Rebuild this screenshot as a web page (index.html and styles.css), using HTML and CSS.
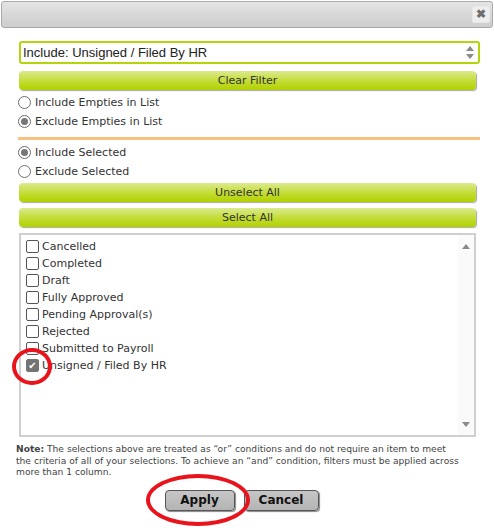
FILE: index.html
```html
<!doctype html>
<html lang="en">
 <head>
  <meta charset="UTF-8">
  <title>Column Filter</title>
  <meta name="viewport" content="width=device-width, initial-scale=1.0">
  <link rel="stylesheet" href="styles.css">
 </head>
 <body>
  <div class="dialog">
   <div class="titlebar">
    <button class="close-btn" title="Close">&#10006;</button>
   </div>
   <div class="content">
    <div class="select-box">
     <span>Include: Unsigned / Filed By HR</span>
     <span class="spinner"><i class="up"></i><i class="down"></i></span>
    </div>
    <button class="green-btn first">Clear Filter</button>

    <div class="radio-group">
     <label class="radio"><span class="dot"></span>Include Empties in List</label>
     <label class="radio"><span class="dot checked"></span>Exclude Empties in List</label>
    </div>

    <div class="divider"></div>

    <div class="radio-group">
     <label class="radio"><span class="dot checked"></span>Include Selected</label>
     <label class="radio"><span class="dot"></span>Exclude Selected</label>
    </div>

    <button class="green-btn tight">Unselect All</button>
    <button class="green-btn">Select All</button>

    <div class="list">
     <ul class="items">
      <li><span class="box"></span>Cancelled</li>
      <li><span class="box"></span>Completed</li>
      <li><span class="box"></span>Draft</li>
      <li><span class="box"></span>Fully Approved</li>
      <li><span class="box"></span>Pending Approval(s)</li>
      <li><span class="box"></span>Rejected</li>
      <li><span class="box"></span>Submitted to Payroll</li>
      <li><span class="box checked">&#10004;</span>Unsigned / Filed By HR</li>
     </ul>
     <div class="scrollbar"><i class="up"></i><i class="down"></i></div>
    </div>

    <p class="note"><b>Note:</b> The selections above are treated as “or” conditions and do not require an item to meet the criteria of all of your selections. To achieve an “and” condition, filters must be applied across more than 1 column.</p>

    <div class="actions">
     <button class="gray-btn apply">Apply</button>
     <button class="gray-btn cancel">Cancel</button>
    </div>
   </div>

   <!-- annotation marks drawn on top of the screenshot -->
   <div class="mark mark-check"></div>
   <div class="mark mark-apply"></div>
  </div>
 </body>
</html>
```

FILE: styles.css
```css
body {
  margin: 0;
  font-family: 'DejaVu Sans', Verdana, sans-serif;
  font-size: 11px;
  color: #333;
  background: #fff;
}

.dialog {
  position: relative;
  width: 494px;
  height: 530px;
  overflow: hidden;
}

.titlebar {
  margin: 1px 1px 0 1px;
  height: 25px;
  border: 1px solid #a9a9a9;
  border-radius: 3px;
  background: linear-gradient(#e4e4e4, #cdcdcd);
  display: flex;
  justify-content: flex-end;
  align-items: center;
  padding-right: 2px;
}

.close-btn {
  width: 18px;
  height: 17px;
  padding: 0;
  border: 1px solid #e6e6e6;
  border-radius: 2px;
  background: #eeeeee;
  color: #6e6e6e;
  font-size: 12px;
  font-weight: bold;
  line-height: 15px;
  cursor: pointer;
}

.content {
  padding: 13px 16px 0 19px;
}

.select-box {
  width: 455px;
  height: 19px;
  border: 2px solid #b6d30b;
  border-radius: 3px;
  display: flex;
  justify-content: space-between;
  align-items: center;
  padding-left: 2px;
  font-family: 'Liberation Sans', Arial, sans-serif;
  font-size: 13px;
  color: #222;
}

.spinner {
  display: flex;
  flex-direction: column;
  gap: 3px;
  margin-right: 4px;
}

.spinner i, .scrollbar i {
  display: block;
  width: 0;
  height: 0;
  border-left: 4px solid transparent;
  border-right: 4px solid transparent;
}

.spinner i.up, .scrollbar i.up {
  border-bottom: 5px solid #8a8a8a;
}

.spinner i.down, .scrollbar i.down {
  border-top: 5px solid #8a8a8a;
}

.green-btn {
  display: block;
  width: 457px;
  height: 19px;
  margin-top: 6px;
  padding: 0;
  border: none;
  border-radius: 4px;
  background: linear-gradient(#dcea90, #c2dc33 55%, #b3d000);
  box-shadow: 1px 1px 1px #a9a9a9;
  font-family: 'DejaVu Sans', Verdana, sans-serif;
  font-size: 11px;
  color: #333;
  cursor: pointer;
}

.green-btn.first {
  margin-top: 7px;
}

.green-btn.tight {
  margin-top: 2px;
}

.radio-group {
  margin: 3px 0 0 -1px;
}

.radio {
  display: flex;
  align-items: center;
  height: 19px;
}

.dot {
  width: 11px;
  height: 11px;
  border: 1px solid #707070;
  border-radius: 50%;
  margin-right: 4px;
  background: #fff;
  position: relative;
}

.dot.checked {
  border-color: #6a6a6a;
}

.dot.checked::after {
  content: "";
  position: absolute;
  left: 2px;
  top: 2px;
  width: 7px;
  height: 7px;
  border-radius: 50%;
  background: #777;
}

.divider {
  width: 462px;
  height: 3px;
  margin: 6px 0 2px -1px;
  background: #f9c17f;
}

.list {
  display: flex;
  width: 453px;
  height: 200px;
  margin-top: 6px;
  border: 2px solid #cfcfcf;
}

.items {
  flex: 1;
  list-style: none;
  margin: 0;
  padding: 3px 0 0 5px;
}

.items li {
  display: flex;
  align-items: center;
  height: 17px;
}

.box {
  width: 11px;
  height: 11px;
  border: 1px solid #555;
  border-radius: 2px;
  margin-right: 3px;
  background: #fff;
  font-size: 10px;
  line-height: 11px;
  text-align: center;
}

.box.checked {
  background: #747474;
  border-color: #747474;
  color: #fff;
}

.scrollbar {
  width: 16px;
  background: #fafafa;
  display: flex;
  flex-direction: column;
  justify-content: space-between;
  align-items: center;
  padding: 9px 0 8px;
}

.note {
  margin: 7px 0 0 -3px;
  font-size: 9.15px;
  line-height: 11.5px;
  color: #444;
  width: 447px;
}

.actions {
  display: flex;
  justify-content: center;
  gap: 9px;
  margin-top: 11px;
  padding-right: 14px;
}

.gray-btn {
  height: 21px;
  padding: 0;
  border: 1px solid #555;
  border-radius: 4px;
  background: linear-gradient(#c6c6c6, #b4b4b4);
  box-shadow: 1px 1px 1px #888;
  font-family: 'DejaVu Sans', Verdana, sans-serif;
  font-size: 12px;
  font-weight: bold;
  color: #111;
  cursor: pointer;
}

.gray-btn.apply {
  width: 70px;
}

.gray-btn.cancel {
  width: 75px;
}

.mark {
  position: absolute;
  border: 4px solid #e8131b;
  border-radius: 50%;
  box-sizing: border-box;
}

.mark-check {
  left: 12px;
  top: 348px;
  width: 40px;
  height: 37px;
}

.mark-apply {
  left: 146px;
  top: 474px;
  width: 104px;
  height: 52px;
}
```
